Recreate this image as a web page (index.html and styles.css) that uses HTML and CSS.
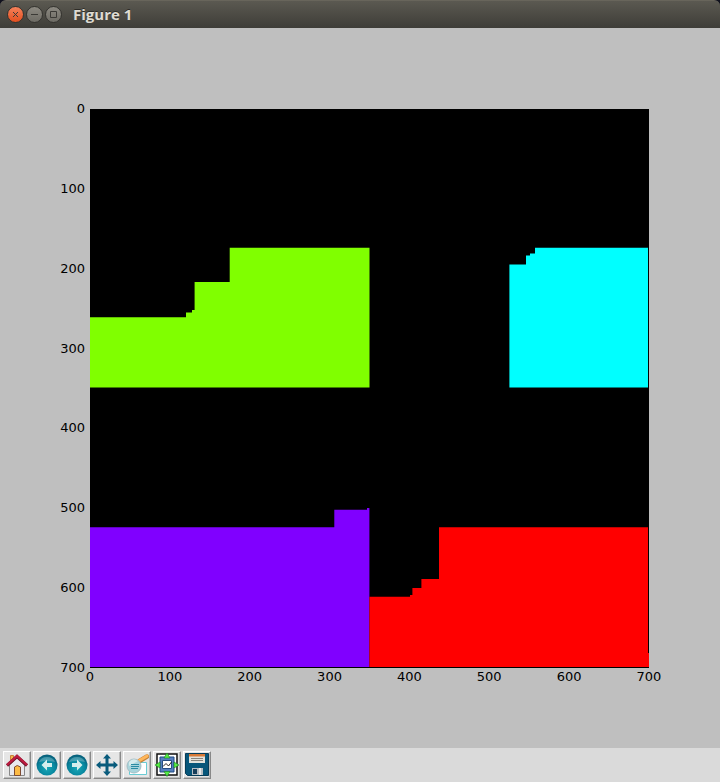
FILE: index.html
```html
<!DOCTYPE html>
<html lang="en">
<head>
<meta charset="utf-8">
<title>Figure 1</title>
<link rel="stylesheet" href="styles.css">
</head>
<body>
<div class="window">
  <header class="titlebar">
    <div class="controls">
      <button class="control close" type="button" aria-label="Close"><svg viewBox="0 0 15 15"><path d="M5 5l5 5M10 5l-5 5"/></svg></button>
      <button class="control" type="button" aria-label="Minimize"><svg viewBox="0 0 15 15"><path d="M4 7.500h7"/></svg></button>
      <button class="control" type="button" aria-label="Maximize"><svg viewBox="0 0 15 15"><path d="M4.500 4.500h6v6h-6z"/></svg></button>
    </div>
    <h1 class="title">Figure 1</h1>
  </header>

  <main class="figure">
    <div class="y-axis">
      <span>0</span><span>100</span><span>200</span><span>300</span><span>400</span><span>500</span><span>600</span><span>700</span>
    </div>
    <svg class="plot" viewBox="0 0 559 559" role="img" aria-label="Segmented regions">
      <rect width="559" height="559" fill="#000"/>
      <path fill="#80ff00" d="M0 208.300H96V203.600H102V201H104.600V173H139.700V138.700H279.500V278.500H0z"/>
      <path fill="#00ffff" d="M419.400 155.500H436V146.600H440V144.500H445V138.700H558V278.500H419.400z"/>
      <path fill="#8000ff" d="M0 418.300H244.300V400.800H277V399H279.400V558H0z"/>
      <path fill="#ff0000" d="M279.400 487.800H320V486H322.400V478.900H331.400V470H349V418.300H558V544H559V558H279.400z"/>
    </svg>
    <div class="x-axis">
      <span>0</span><span>100</span><span>200</span><span>300</span><span>400</span><span>500</span><span>600</span><span>700</span>
    </div>
  </main>

  <nav class="toolbar" aria-label="Plot tools">
    <button class="tool" type="button" aria-label="Home">
      <svg viewBox="0 0 24 24">
        <path d="M5.500 2.500h3v8h-3z" fill="#f3b64d" stroke="#c9803a"/>
        <path d="M4.500 12L12 5l7.500 7v10.500H4.500z" fill="#e9e9ee" stroke="#888"/>
        <path d="M9.500 22.500V14q2.500-3 6 0v8.500z" fill="#fdbb45" stroke="#7d4c34"/>
        <path d="M2 12.500L12 3.500L22 12.500" fill="none" stroke="#76142b" stroke-width="3.200"/>
        <path d="M2 12L12 3L22 12" fill="none" stroke="#bd1b40" stroke-width="2.200"/>
      </svg>
    </button>
    <button class="tool" type="button" aria-label="Back">
      <svg viewBox="0 0 24 24">
        <defs><radialGradient id="ball" cx="50%" cy="65%" r="60%"><stop offset="0" stop-color="#18a8b8"/><stop offset=".65" stop-color="#07869e"/><stop offset="1" stop-color="#07617c"/></radialGradient></defs>
        <circle cx="12" cy="12" r="10.500" fill="url(#ball)"/>
        <path d="M4 9q2-5 8-5t8 5q-8-2-16 0z" fill="#fff" opacity=".25"/>
        <path d="M6.500 12l5.500-5.500V10h5v4h-5v3.500z" fill="#d5efee"/>
      </svg>
    </button>
    <button class="tool" type="button" aria-label="Forward">
      <svg viewBox="0 0 24 24">
        <circle cx="12" cy="12" r="10.500" fill="url(#ball)"/>
        <path d="M4 9q2-5 8-5t8 5q-8-2-16 0z" fill="#fff" opacity=".25"/>
        <path d="M17.500 12L12 6.500V10H7v4h5v3.500z" fill="#d5efee"/>
      </svg>
    </button>
    <button class="tool" type="button" aria-label="Pan">
      <svg viewBox="0 0 24 24"><path fill="#095b7c" d="M12 1l4 4.500h-2.500v5h5V8l4.500 4-4.500 4v-2.500h-5v5H16L12 23l-4-4.500h2.500v-5h-5V16L1 12l4.500-4v2.500h5v-5H8z"/></svg>
    </button>
    <button class="tool" type="button" aria-label="Zoom to rectangle">
      <svg viewBox="0 0 24 24">
        <path d="M4.500 9.500h17v12h-17z" fill="#fff" stroke="#69cbd4"/>
        <path d="M14.500 8L22 3.500" stroke="#c78338" stroke-width="4.500" stroke-linecap="round"/>
        <path d="M14.500 7.500L22 3" stroke="#ffb65a" stroke-width="3" stroke-linecap="round"/>
        <circle cx="9" cy="13" r="7" fill="#a9d5dc" stroke="#a5bec5"/>
        <path d="M4 9q4-5 9-1l-9 5z" fill="#e9f5f4" opacity=".7"/>
        <path d="M6 11.500h8M6 13.500h8M6 15.500h7" stroke="#2b8ca3"/>
      </svg>
    </button>
    <button class="tool" type="button" aria-label="Configure subplots">
      <svg viewBox="0 0 24 24">
        <path d="M2 1h20v21H2z" fill="#fff" stroke="#111" stroke-width="1.500"/>
        <path d="M5 4h14v15H5z" fill="#557fc0" stroke="#234a84"/>
        <path d="M7.500 7.500h9v8h-9z" fill="#fff" stroke="#264e83"/>
        <path d="M8 13.500l3-3 2.500 2.500 3-4" fill="none" stroke="#222"/>
        <path d="M12 0l3 5H9zM12 23.500l3-5H9zM0 12l5-3v6zM24 12l-5-3v6z" fill="#57ed42" stroke="#188424" stroke-width=".6"/>
      </svg>
    </button>
    <button class="tool" type="button" aria-label="Save">
      <svg viewBox="0 0 24 24">
        <path d="M.5 .5h23v22h-21l-2-2z" fill="#07567a" stroke="#063d59"/>
        <path d="M4 1h16v9H4z" fill="#e2e2dc"/>
        <path d="M4 1h16v2.500H4z" fill="#d87a37"/>
        <path d="M6 5.500h12M6 7.500h12" stroke="#88847c"/>
        <path d="M7 15h11v7H7z" fill="#b7bec3"/>
        <path d="M8 16h4v5H8z" fill="#173e5b"/>
        <path d="M14 15h2v7h-2z" fill="#e9e9e9"/>
      </svg>
    </button>
  </nav>
</div>
</body>
</html>
```
FILE: styles.css
```css
* { box-sizing: border-box; }
body {
  margin: 0;
  background: #dadada;
  font-family: "DejaVu Sans", sans-serif;
}
.window {
  display: flex;
  flex-direction: column;
  min-height: 100vh;
  background: #10111d;
}
.titlebar {
  display: flex;
  align-items: center;
  gap: 11px;
  height: 28px;
  padding: 0 7px;
  border-top: 1px solid #68655b;
  border-radius: 6px 6px 0 0;
  background: linear-gradient(#5b5951, #3e3d38);
}
.controls { display: flex; gap: 2px; }
.control {
  width: 17px;
  height: 17px;
  padding: 0;
  border: 1px solid #34332f;
  border-radius: 50%;
  background: linear-gradient(#8c8981, #6d6b64);
}
.control.close { background: linear-gradient(#f6825b, #e34f1f); }
.control svg {
  display: block;
  width: 15px;
  height: 15px;
  fill: none;
  stroke: #3b3a36;
}
.title {
  margin: 0;
  padding-bottom: 2px;
  color: #dfdbd2;
  font: bold 15px/20px "Open Sans", "Noto Sans", sans-serif;
  text-shadow: 0 -1px #2d2c28;
}
.figure {
  display: grid;
  grid-template-columns: 12.5% 1fr 71px;
  flex: 1;
  align-content: start;
  padding: 81px 0 63px;
  background: #bfbfbf;
  color: #000;
  font-size: 13px;
  line-height: 16px;
}
.plot {
  display: block;
  width: 100%;
}
.y-axis {
  display: flex;
  flex-direction: column;
  justify-content: space-between;
  margin: -8px 0;
  padding-right: 5px;
  text-align: right;
}
.x-axis {
  display: flex;
  grid-column: 2;
  justify-content: space-between;
  margin: 1px -20px 0;
  text-align: center;
}
.x-axis span { width: 40px; }
.toolbar {
  display: flex;
  gap: 2px;
  padding: 3px;
  background: #dadada;
}
.tool {
  width: 28px;
  height: 28px;
  padding: 1px;
  border: 1px solid;
  border-color: #fff #888 #888 #fff;
  background: #e6e6e6;
  box-shadow: inset -1px -1px #bbb;
}
.tool svg {
  display: block;
  width: 24px;
  height: 24px;
}
```
